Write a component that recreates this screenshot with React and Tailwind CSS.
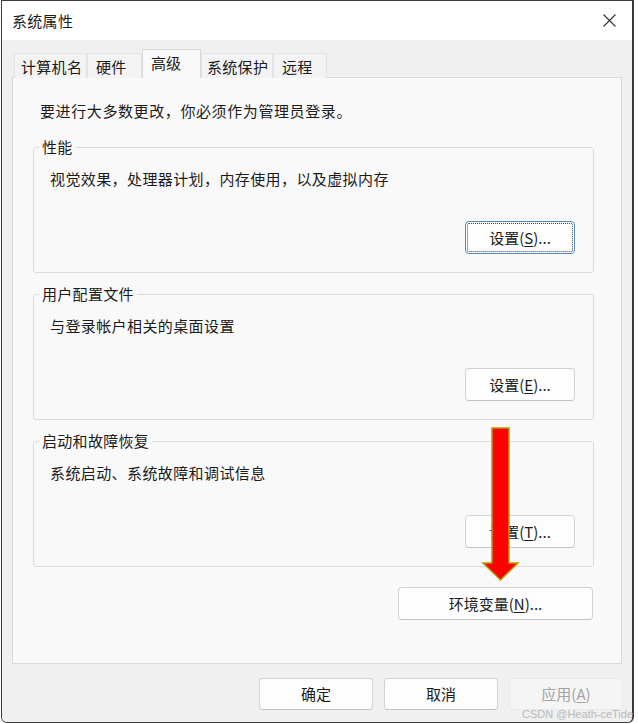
import React from 'react';

const tabs = [
  { label: '计算机名', w: 'w-[73px]', pl: 'pl-[6px]' },
  { label: '硬件', w: 'w-[55px]', pl: 'pl-[8px]' },
  { label: '高级', w: 'w-[59px]', pl: 'pl-[8px]', active: true },
  { label: '系统保护', w: 'w-[72px]', pl: 'pl-[5px]' },
  { label: '远程', w: 'w-[54px]', pl: 'pl-[8px]' },
];

const groups = [
  { title: '性能', desc: '视觉效果，处理器计划，内存使用，以及虚拟内存', key: 'S', focused: true },
  { title: '用户配置文件', desc: '与登录帐户相关的桌面设置', key: 'E' },
  { title: '启动和故障恢复', desc: '系统启动、系统故障和调试信息', key: 'T' },
];

function Btn({ children, className = '', disabled, focused }) {
  return (
    <div
      className={`flex items-center justify-center rounded-[4px] border text-[15px] leading-none pb-[1px] ${
        disabled
          ? 'bg-[#f5f5f5] border-[#e9e9e9] text-[#a3a3a3]'
          : focused
          ? 'bg-[#fdfdfd] border-[#4d88c8] outline-1 outline-dotted outline-[#444] outline-offset-[-3px]'
          : 'bg-[#fdfdfd] border-[#d3d3d3] border-b-[#c2c2c2]'
      } ${className}`}
    >
      {children}
    </div>
  );
}

function GroupBox({ title, desc, mnemonic, focused }) {
  return (
    <div className="relative w-[561px] h-[126px] border border-[#dcdcdc] rounded-[3px] flex flex-col">
      <span className="absolute left-[5px] top-[-11px] px-[3px] bg-[#f9f9f9] text-[15px] leading-[20px] tracking-[0.3px]">{title}</span>
      <div className="pt-[21px] pl-[16px] text-[15px] leading-[20px] tracking-[0.4px]">{desc}</div>
      <div className="flex justify-end pr-[18px] mt-[32px]">
        <Btn focused={focused} className="w-[110px] h-[33px]">
          设置(<span className="underline underline-offset-2">{mnemonic}</span>)...
        </Btn>
      </div>
    </div>
  );
}

export default function App() {
  return (
    <div className="relative w-[638px] h-[724px] bg-white text-[#1b1b1b] font-['Noto_Sans_CJK_SC',sans-serif]">
      <div className="ml-[1px] w-[633px] h-[723px] border border-[#3c3c3c] border-r-2 rounded-b-[6px] overflow-hidden flex flex-col">

        {/* Title bar */}
        <div className="h-[39px] shrink-0 bg-white flex items-center justify-between pl-[10px] pr-[16px]">
          <span className="text-[15px] leading-none tracking-[0.3px]">系统属性</span>
          <svg width="13" height="13" viewBox="0 0 13 13" className="text-[#333]">
            <path d="M0.5 0.5 L12.5 12.5 M12.5 0.5 L0.5 12.5" stroke="currentColor" strokeWidth="1.1" fill="none" />
          </svg>
        </div>

        {/* Body */}
        <div className="flex-1 bg-[#f0f0f0] flex flex-col">
          {/* Tabs */}
          <div className="relative z-10 mt-[9px] ml-[12px] h-[29px] flex items-end">
            {tabs.map((t) =>
              t.active ? (
                <div
                  key={t.label}
                  className={`${t.w} ${t.pl} h-[29px] bg-[#f9f9f9] border border-b-0 border-[#d9d9d9] text-[15px] leading-none pt-[5px]`}
                >
                  {t.label}
                </div>
              ) : (
                <div
                  key={t.label}
                  className={`${t.w} ${t.pl} h-[25px] bg-[#f3f3f3] border border-b-0 border-[#e3e3e3] text-[15px] leading-none pt-[5px] tracking-[0.3px]`}
                >
                  {t.label}
                </div>
              )
            )}
          </div>

          {/* Panel */}
          <div className="-mt-px ml-[10px] w-[610px] h-[587px] bg-[#f9f9f9] border border-[#d9d9d9] pt-[23px] pl-[20px] flex flex-col">
            <div className="pl-[7px] text-[15px] leading-[20px] tracking-[0.6px]">要进行大多数更改，你必须作为管理员登录。</div>
            <div className="mt-[26px] flex flex-col gap-[21px]">
              {groups.map((g) => (
                <GroupBox key={g.title} title={g.title} desc={g.desc} mnemonic={g.key} focused={g.focused} />
              ))}
            </div>
            <div className="w-[560px] flex justify-end mt-[20px]">
              <Btn className="w-[195px] h-[33px]">
                环境变量(<span className="underline underline-offset-2">N</span>)...
              </Btn>
            </div>
          </div>

          {/* Footer */}
          <div className="mt-[14px] flex justify-end gap-[11px] pr-[9px]">
            <Btn className="w-[114px] h-[32px]">确定</Btn>
            <Btn className="w-[114px] h-[32px]">取消</Btn>
            <Btn disabled className="w-[114px] h-[32px]">
              应用(<span className="underline underline-offset-2">A</span>)
            </Btn>
          </div>
        </div>
      </div>

      {/* Red annotation arrow */}
      <svg className="absolute left-0 top-0 pointer-events-none" width="638" height="724">
        <polygon
          points="492,428 509,428 509,563 518,563 500.5,580 483,563 492,563"
          fill="#ff0000"
          stroke="#b89a00"
          strokeWidth="1.5"
          strokeLinejoin="miter"
        />
      </svg>

      {/* Watermark */}
      <span className="absolute left-[522px] top-[706px] text-[11px] leading-[16px] text-[#b8b8b8] font-['Liberation_Sans',sans-serif] whitespace-nowrap">
        CSDN @Heath-ceTide
      </span>
    </div>
  );
}
